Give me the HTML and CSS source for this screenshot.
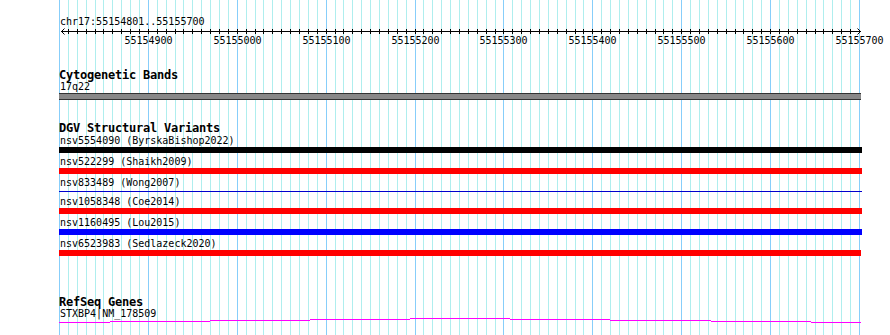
FILE: index.html
```html
<!DOCTYPE html>
<html lang="en">
<head>
    <meta charset="UTF-8">
    <meta name="viewport" content="width=device-width, initial-scale=1.0">
    <title>chr17:55154801..55155700</title>
    <link rel="stylesheet" href="styles.css">
</head>
<body>
<div class="browser">
    <!-- grid: one line every 10 bp, darker every 100 bp -->
    <svg class="grid" width="890" height="335" viewBox="0 0 890 335">
        <path class="grid-minor" d="M68.5 0V335M77.5 0V335M86.5 0V335M95.5 0V335M103.5 0V335M112.5 0V335M121.5 0V335M130.5 0V335M139.5 0V335M157.5 0V335M166.5 0V335M175.5 0V335M183.5 0V335M192.5 0V335M201.5 0V335M210.5 0V335M219.5 0V335M228.5 0V335M246.5 0V335M255.5 0V335M263.5 0V335M272.5 0V335M281.5 0V335M290.5 0V335M299.5 0V335M308.5 0V335M317.5 0V335M335.5 0V335M343.5 0V335M352.5 0V335M361.5 0V335M370.5 0V335M379.5 0V335M388.5 0V335M397.5 0V335M406.5 0V335M423.5 0V335M432.5 0V335M441.5 0V335M450.5 0V335M459.5 0V335M468.5 0V335M477.5 0V335M486.5 0V335M495.5 0V335M512.5 0V335M521.5 0V335M530.5 0V335M539.5 0V335M548.5 0V335M557.5 0V335M566.5 0V335M575.5 0V335M583.5 0V335M601.5 0V335M610.5 0V335M619.5 0V335M628.5 0V335M637.5 0V335M646.5 0V335M655.5 0V335M663.5 0V335M672.5 0V335M690.5 0V335M699.5 0V335M708.5 0V335M717.5 0V335M726.5 0V335M735.5 0V335M743.5 0V335M752.5 0V335M761.5 0V335M779.5 0V335M788.5 0V335M797.5 0V335M806.5 0V335M815.5 0V335M823.5 0V335M832.5 0V335M841.5 0V335M850.5 0V335"/>
        <path class="grid-major" d="M59.5 0V335M148.5 0V335M237.5 0V335M326.5 0V335M415.5 0V335M503.5 0V335M592.5 0V335M681.5 0V335M770.5 0V335M859.5 0V335"/>
    </svg>

    <svg class="ruler" width="890" height="48" viewBox="0 0 890 48">
        <text class="ruler-pos" x="60" y="25">chr17:55154801..55155700</text>
        <path class="ruler-line" d="M61 31.5H861"/>
        <path class="ruler-line" d="M64.5 28.5L61.5 31.5L64.5 34.5M857.5 28.5L860.5 31.5L857.5 34.5"/>
        <path class="ruler-ticks" d="M68.5 29v5M77.5 29v5M86.5 29v5M95.5 29v5M103.5 29v5M112.5 29v5M121.5 29v5M130.5 29v5M139.5 29v5M148.5 29v5M157.5 29v5M166.5 29v5M175.5 29v5M183.5 29v5M192.5 29v5M201.5 29v5M210.5 29v5M219.5 29v5M228.5 29v5M237.5 29v5M246.5 29v5M255.5 29v5M263.5 29v5M272.5 29v5M281.5 29v5M290.5 29v5M299.5 29v5M308.5 29v5M317.5 29v5M326.5 29v5M335.5 29v5M343.5 29v5M352.5 29v5M361.5 29v5M370.5 29v5M379.5 29v5M388.5 29v5M397.5 29v5M406.5 29v5M415.5 29v5M423.5 29v5M432.5 29v5M441.5 29v5M450.5 29v5M459.5 29v5M468.5 29v5M477.5 29v5M486.5 29v5M495.5 29v5M503.5 29v5M512.5 29v5M521.5 29v5M530.5 29v5M539.5 29v5M548.5 29v5M557.5 29v5M566.5 29v5M575.5 29v5M583.5 29v5M592.5 29v5M601.5 29v5M610.5 29v5M619.5 29v5M628.5 29v5M637.5 29v5M646.5 29v5M655.5 29v5M663.5 29v5M672.5 29v5M681.5 29v5M690.5 29v5M699.5 29v5M708.5 29v5M717.5 29v5M726.5 29v5M735.5 29v5M743.5 29v5M752.5 29v5M761.5 29v5M770.5 29v5M779.5 29v5M788.5 29v5M797.5 29v5M806.5 29v5M815.5 29v5M823.5 29v5M832.5 29v5M841.5 29v5M850.5 29v5"/>
        <text class="ruler-num" x="148.5" y="44">55154900</text>
        <text class="ruler-num" x="237.5" y="44">55155000</text>
        <text class="ruler-num" x="326.5" y="44">55155100</text>
        <text class="ruler-num" x="415.5" y="44">55155200</text>
        <text class="ruler-num" x="503.5" y="44">55155300</text>
        <text class="ruler-num" x="592.5" y="44">55155400</text>
        <text class="ruler-num" x="681.5" y="44">55155500</text>
        <text class="ruler-num" x="770.5" y="44">55155600</text>
        <text class="ruler-num" x="859.5" y="44">55155700</text>
    </svg>

    <div class="tracks">
        <section class="track cyto">
            <div class="track-title">Cytogenetic Bands</div>
            <div class="feat-label">17q22</div>
            <div class="band"></div>
        </section>

        <section class="track dgv">
            <div class="track-title">DGV Structural Variants</div>
            <div class="variant">
                <div class="feat-label">nsv5554090 (ByrskaBishop2022)</div>
                <div class="bar bar-black"></div>
            </div>
            <div class="variant">
                <div class="feat-label">nsv522299 (Shaikh2009)</div>
                <div class="bar bar-red"></div>
            </div>
            <div class="variant">
                <div class="feat-label">nsv833489 (Wong2007)</div>
                <div class="bar bar-line"></div>
            </div>
            <div class="variant">
                <div class="feat-label">nsv1058348 (Coe2014)</div>
                <div class="bar bar-red"></div>
            </div>
            <div class="variant">
                <div class="feat-label">nsv1160495 (Lou2015)</div>
                <div class="bar bar-blue"></div>
            </div>
            <div class="variant">
                <div class="feat-label">nsv6523983 (Sedlazeck2020)</div>
                <div class="bar bar-red bar-end"></div>
            </div>
        </section>

        <section class="track refseq">
            <div class="track-title">RefSeq Genes</div>
            <div class="feat-label">STXBP4|NM_178509</div>
            <!-- intron connector, stepped hat -->
            <svg class="gene" width="803" height="5" viewBox="0 0 803 5">
                <rect x="0" y="4" width="51" height="1"/>
                <rect x="51" y="3" width="100" height="1"/>
                <rect x="151" y="2" width="100" height="1"/>
                <rect x="251" y="1" width="100" height="1"/>
                <rect x="351" y="0" width="100" height="1"/>
                <rect x="451" y="1" width="100" height="1"/>
                <rect x="551" y="2" width="101" height="1"/>
                <rect x="652" y="3" width="100" height="1"/>
                <rect x="752" y="4" width="50" height="1"/>
            </svg>
        </section>
    </div>
</div>
</body>
</html>
```

FILE: styles.css
```css
body {
    margin: 0;
    background: #fff;
    color: #000;
    font-family: 'DejaVu Sans Mono', 'Liberation Mono', monospace;
}
.browser {
    position: relative;
    width: 890px;
    height: 335px;
    overflow: hidden;
}
.grid {
    position: absolute;
    top: 0;
    left: 0;
}
.grid path {
    fill: none;
    stroke-width: 1;
    shape-rendering: crispEdges;
}
.grid-minor {
    stroke: #afeeee;
}
.grid-major {
    stroke: #87cefa;
}
.ruler {
    display: block;
    position: relative;
}
.ruler text {
    font-family: 'DejaVu Sans Mono', monospace;
    font-size: 10px;
    fill: #000;
}
.ruler-num {
    text-anchor: middle;
}
.ruler-line, .ruler-ticks {
    fill: none;
    stroke: #000;
    stroke-width: 1;
}
.ruler-ticks {
    shape-rendering: crispEdges;
}
.tracks {
    position: relative;
    margin-left: 59px;
    width: 803px;
}
.track-title {
    padding-top: 1px;
    margin-bottom: -1px;
    font-weight: bold;
    font-size: 12px;
    line-height: 12px;
    letter-spacing: -0.22px;
    white-space: nowrap;
}
.feat-label {
    padding-left: 1px;
    font-size: 10px;
    line-height: 13px;
    white-space: nowrap;
}
.cyto {
    margin-top: 20px;
}
.dgv {
    margin-top: 21px;
}
.refseq {
    margin-top: 39px;
}
.band {
    width: 802px;
    height: 5px;
    background: #888;
    border-top: 1px solid #333;
    border-bottom: 1px solid #333;
}
.track-title + .variant {
    margin-top: 1px;
}
.variant + .variant {
    margin-top: 2px;
}
.bar {
    height: 6px;
}
.bar-black {
    background: #000;
}
.bar-red {
    background: #f00;
}
.bar-blue {
    background: #00f;
}
.bar-line {
    height: 1px;
    margin: 2px 0 3px;
    background: #0000cd;
}
.bar-end {
    width: 802px;
}
.gene {
    display: block;
    margin-top: -2px;
}
.gene rect {
    fill: #f0f;
}
```
